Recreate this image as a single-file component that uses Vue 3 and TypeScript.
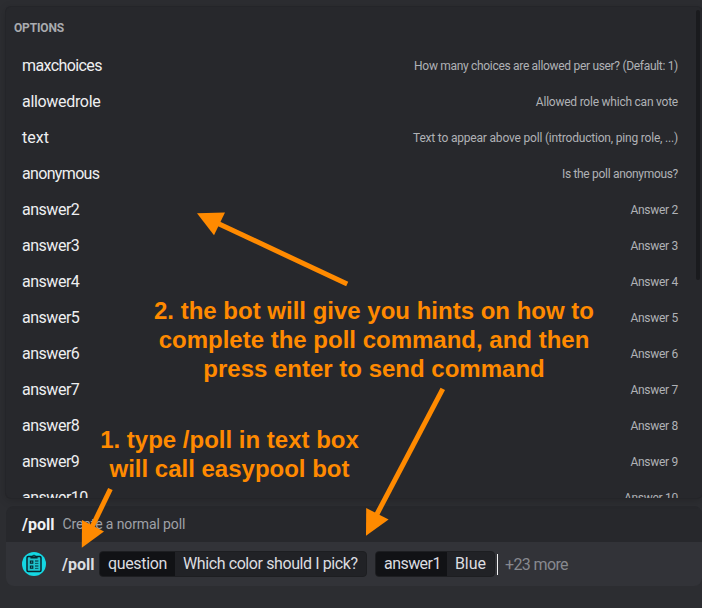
<script setup lang="ts">
interface Option {
  name: string
  hint: string
  nameTracking: number
  hintTracking: number
}

interface Arrow {
  tail: [number, number]
  neck: [number, number]
  head: string
}

const options: Option[] = [
  {
    name: 'maxchoices',
    hint: 'How many choices are allowed per user? (Default: 1)',
    nameTracking: -0.6,
    hintTracking: -0.31,
  },
  { name: 'allowedrole', hint: 'Allowed role which can vote', nameTracking: -0.32, hintTracking: -0.23 },
  {
    name: 'text',
    hint: 'Text to appear above poll (introduction, ping role, ...)',
    nameTracking: 0,
    hintTracking: -0.19,
  },
  { name: 'anonymous', hint: 'Is the poll anonymous?', nameTracking: -0.66, hintTracking: -0.31 },
  ...Array.from({ length: 9 }, (_, i) => ({
    name: `answer${i + 2}`,
    hint: `Answer ${i + 2}`,
    nameTracking: -0.48,
    hintTracking: -0.28,
  })),
]

const arrows: Arrow[] = [
  { tail: [347.2, 284], neck: [217, 223], head: '197,213.2 225,212.6 214,235.2' },
  { tail: [442.8, 388.8], neck: [376.5, 515], head: '366,535.8 366.2,508 388.6,519.6' },
  { tail: [110.4, 489], neck: [92.5, 526], head: '81.8,547.8 82,520 104,531.4' },
]
</script>

<template>
  <main class="screen">
    <section class="popup">
      <h2 class="heading">OPTIONS</h2>
      <ul class="list">
        <li v-for="option in options" :key="option.name" class="row">
          <span class="name" :style="{ letterSpacing: option.nameTracking + 'px' }">{{ option.name }}</span>
          <span class="hint" :style="{ letterSpacing: option.hintTracking + 'px' }">{{ option.hint }}</span>
        </li>
      </ul>
      <div class="scrollbar"></div>
    </section>

    <section class="composer">
      <header class="summary">
        <strong class="command">/poll</strong>
        <span class="about">Create a normal poll</span>
      </header>
      <div class="input">
        <svg class="avatar" viewBox="0 0 24 24">
          <circle cx="12" cy="12" r="12" fill="#14d8e4" />
          <rect x="5" y="4.6" width="14" height="14.8" rx="1.2" fill="#1fc3cd" stroke="#07262e" stroke-width="1.5" />
          <path d="M8.4 4h1.9a1.8 1.8 0 0 1 3.4 0h1.9v2.6H8.4z" fill="#07262e" />
          <circle cx="12" cy="4" r=".6" fill="#14d8e4" />
          <path d="M8.4 9h2.4v2.2H8.4zM8.4 14h2.4v2.2H8.4z" fill="#1a97a2" stroke="#07262e" stroke-width="1.1" />
          <path d="M13 9h3.4M13 14h3.4" stroke="#07262e" stroke-width="1.2" />
          <path d="M13 11.4h3.4M13 16.4h3.4" stroke="#07262e" stroke-width=".7" />
        </svg>
        <strong class="command typed">/poll</strong>
        <div class="pill first">
          <span class="key question">question</span>
          <span class="value">Which color should I pick?</span>
        </div>
        <div class="pill">
          <span class="key">answer1</span>
          <span class="value blue">Blue</span>
        </div>
        <i class="caret"></i>
        <span class="more">+23 more</span>
      </div>
    </section>

    <p class="note note-hints">
      2. the bot will give you hints on how to<br />complete the poll command, and then<br />press enter to send command
    </p>
    <p class="note note-type">1. type /poll in text box<br />will call easypool bot</p>

    <svg class="arrows" viewBox="0 0 702 608">
      <g v-for="arrow in arrows" :key="arrow.head" fill="#ff8a00" stroke="#ff8a00">
        <line
          :x1="arrow.tail[0]"
          :y1="arrow.tail[1]"
          :x2="arrow.neck[0]"
          :y2="arrow.neck[1]"
          stroke-width="5"
        />
        <polygon :points="arrow.head" stroke="none" />
      </g>
    </svg>
  </main>
</template>

<style>
body {
  background: #2c2d31;
}
</style>

<style scoped>
.screen {
  position: relative;
  box-sizing: border-box;
  width: 702px;
  height: 608px;
  padding: 7px 0 0 6px;
  overflow: hidden;
  background: #2c2d31;
  font-family: Roboto, 'Liberation Sans', sans-serif;
}

.popup {
  position: relative;
  box-sizing: border-box;
  height: 491px;
  overflow: hidden;
  border-radius: 5px;
  background: #27282c;
  box-shadow: 0 0 0 1px #242529, 0 2px 10px 0 rgba(0, 0, 0, 0.2);
  z-index: 1;
}

.heading {
  margin: 0;
  padding: 13px 8px 0;
  height: 28px;
  line-height: 16px;
  font-size: 12px;
  font-weight: 700;
  letter-spacing: -0.15px;
  color: #a9abaf;
}

.list {
  margin: 0;
  padding: 0;
  list-style: none;
}

.row {
  display: flex;
  align-items: center;
  justify-content: space-between;
  height: 36px;
  padding: 0 24px 0 16px;
}

.name {
  padding-bottom: 1px;
  font-size: 16px;
  color: #eeeff1;
}

.hint {
  font-size: 12px;
  color: #b0b2b6;
}

.scrollbar {
  position: absolute;
  top: 3px;
  right: 2px;
  width: 4px;
  height: 270px;
  border-radius: 2px;
  background: #1a1b1e;
}

.composer {
  margin-top: 8px;
  border-radius: 8px;
  overflow: hidden;
}

.summary {
  display: flex;
  align-items: center;
  gap: 8px;
  height: 36px;
  padding-left: 16px;
  background: #27282c;
}

.command {
  font-size: 16px;
  font-weight: 700;
  color: #f0f1f3;
}

.about {
  font-size: 14px;
  letter-spacing: -0.12px;
  color: #9fa1a7;
}

.input {
  display: flex;
  align-items: center;
  height: 44px;
  padding-left: 16px;
  background: #323338;
  font-size: 16px;
  white-space: nowrap;
  color: #dcdde0;
}

.avatar {
  width: 24px;
  height: 24px;
  margin-right: 16px;
}

.typed {
  width: 37px;
  color: #dcdde0;
}

.pill {
  display: flex;
  flex: none;
  box-sizing: border-box;
  height: 26px;
  margin-right: 2px;
  border: 1px solid #1d1e21;
  border-radius: 4px;
  background: #212226;
  line-height: 24px;
}

.first {
  margin-right: 8px;
  width: 268px;
}

.key {
  flex: none;
  box-sizing: border-box;
  width: 71px;
  padding-left: 8px;
  border-radius: 3px 0 0 3px;
  background: #111215;
  letter-spacing: -0.55px;
}

.question {
  width: 75px;
  letter-spacing: -0.35px;
}

.value {
  padding: 0 8px;
  letter-spacing: -0.4px;
}

.blue {
  box-sizing: border-box;
  width: 47px;
  letter-spacing: -0.1px;
}

.caret {
  width: 1px;
  height: 21px;
  margin-right: 7px;
  background: #f2f2f3;
}

.more {
  letter-spacing: -0.62px;
  color: #87898f;
}

.note {
  position: absolute;
  z-index: 2;
  margin: 0;
  font: bold 24px/29px 'Liberation Sans', sans-serif;
  text-align: center;
  white-space: nowrap;
  color: #ff8a00;
}

.note-hints {
  top: 296px;
  left: 374px;
  transform: translateX(-50%);
}

.note-type {
  top: 425px;
  left: 229.5px;
  transform: translateX(-50%);
}

.arrows {
  position: absolute;
  z-index: 3;
  inset: 0;
  width: 702px;
  height: 608px;
}
</style>
